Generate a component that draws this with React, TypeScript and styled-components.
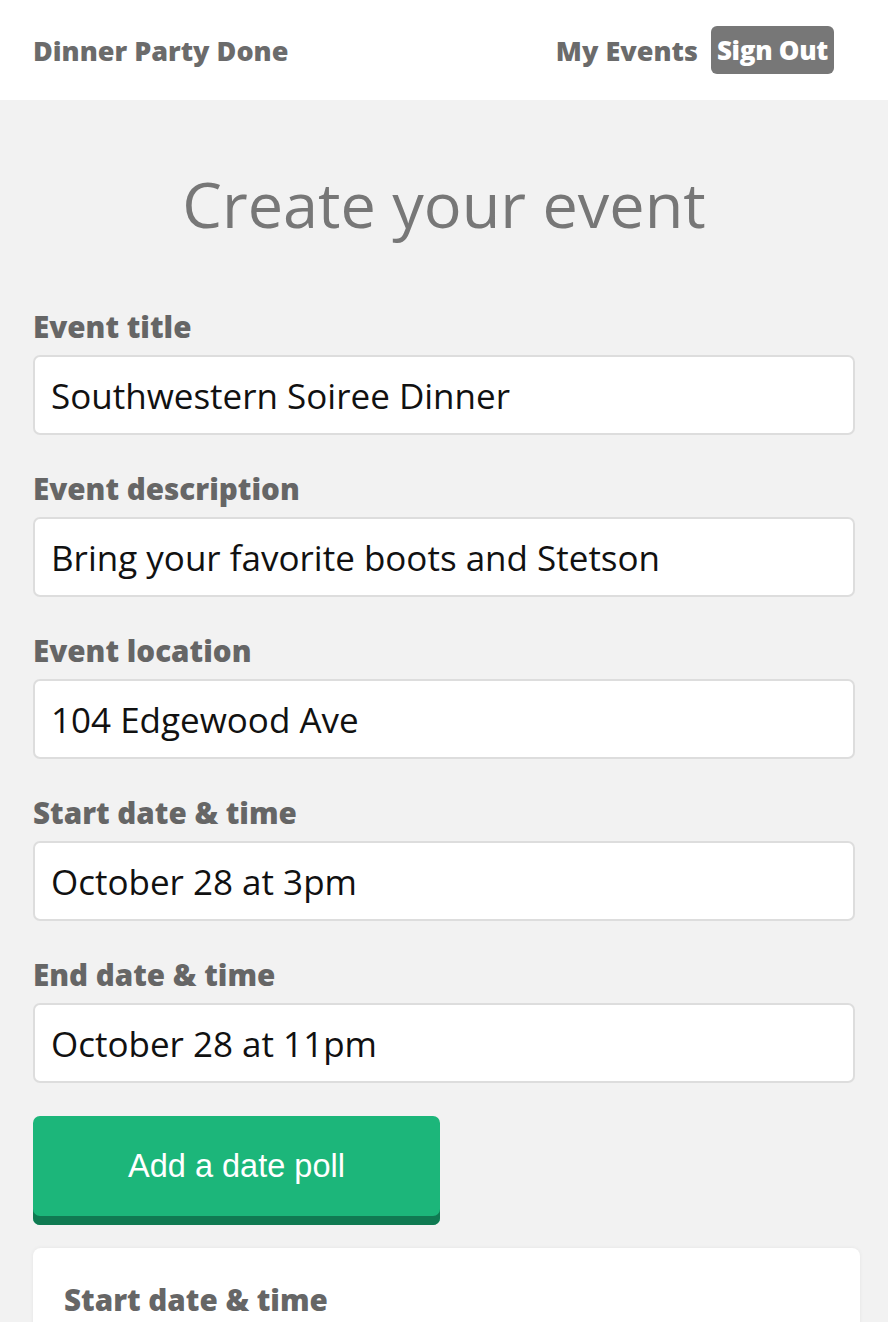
import React from "react";
import styled, { createGlobalStyle } from "styled-components";

const Global = createGlobalStyle`
  html, body { margin: 0; padding: 0; background: #f2f2f2; }
  body { font-family: "Open Sans", "Noto Sans", sans-serif; }
  * { box-sizing: border-box; }
`;

const Header = styled.header`
  height: 100px;
  background: #fff;
  display: flex;
  align-items: center;
  justify-content: space-between;
  padding: 0 54px 0 33px;
`;

const Brand = styled.div`
  font-family: "Open Sans", sans-serif;
  font-weight: 800;
  font-size: 27px;
  color: #6b6b6b;
`;

const Nav = styled.nav`
  display: flex;
  align-items: center;
  gap: 13px;
`;

const NavLink = styled.a`
  font-family: "Open Sans", sans-serif;
  font-weight: 800;
  font-size: 27px;
  color: #6b6b6b;
  text-decoration: none;
`;

const SignOut = styled.button`
  height: 48px;
  padding: 0 6px;
  border: none;
  border-radius: 6px;
  background: #777;
  color: #fff;
  font-family: "Open Sans", sans-serif;
  font-weight: 800;
  font-size: 26px;
  letter-spacing: -0.3px;
`;

const Main = styled.main`
  padding: 67px 33px 0 33px;
`;

const Title = styled.h1`
  margin: 0 0 69px 0;
  text-align: center;
  font-family: "Open Sans", sans-serif;
  font-weight: 400;
  font-size: 63px;
  line-height: 74px;
  color: #777;
`;

const Field = styled.div`
  display: flex;
  flex-direction: column;
  gap: 11px;
  margin-bottom: 37px;
  &:last-of-type { margin-bottom: 33px; }
`;

const Label = styled.label`
  font-family: "Open Sans", sans-serif;
  font-weight: 800;
  font-size: 29.6px;
  line-height: 34px;
  color: #666;
`;

const Input = styled.input`
  height: 80px;
  width: 100%;
  border: 2px solid #ddd;
  border-radius: 7px;
  background: #fff;
  padding: 0 16px;
  font-family: "Open Sans", sans-serif;
  font-size: 35px;
  color: #111;
  outline: none;
`;

const PollButton = styled.button`
  width: 407px;
  height: 109px;
  border: none;
  border-radius: 7px;
  background: #1cb67a;
  box-shadow: inset 0 -9px 0 #107a52;
  padding-bottom: 9px;
  color: #fff;
  font-family: "Liberation Sans", Arial, sans-serif;
  font-size: 32.5px;
  display: block;
`;

const Card = styled.section`
  margin-top: 23px;
  margin-right: -5px;
  background: #fff;
  border-radius: 8px;
  box-shadow: 0 0 4px rgba(0, 0, 0, 0.06);
  padding: 35px 31px 40px;
  min-height: 120px;
`;

const CardLabel = styled(Label)``;

const fields = [
  ["Event title", "Southwestern Soiree Dinner"],
  ["Event description", "Bring your favorite boots and Stetson"],
  ["Event location", "104 Edgewood Ave"],
  ["Start date & time", "October 28 at 3pm"],
  ["End date & time", "October 28 at 11pm"],
];

export default function App() {
  return (
    <>
      <Global />
      <Header>
        <Brand>Dinner Party Done</Brand>
        <Nav>
          <NavLink href="#">My Events</NavLink>
          <SignOut>Sign Out</SignOut>
        </Nav>
      </Header>
      <Main>
        <Title>Create your event</Title>
        <form>
          {fields.map(([label, value]) => (
            <Field key={label}>
              <Label>{label}</Label>
              <Input defaultValue={value} />
            </Field>
          ))}
        </form>
        <PollButton>Add a date poll</PollButton>
        <Card>
          <CardLabel>Start date &amp; time</CardLabel>
        </Card>
      </Main>
    </>
  );
}
